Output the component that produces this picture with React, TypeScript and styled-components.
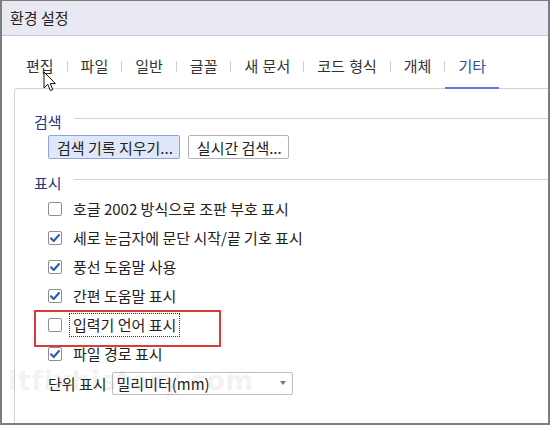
import React from "react";
import styled, { createGlobalStyle } from "styled-components";

const GlobalStyle = createGlobalStyle`
  html, body {
    margin: 0;
    padding: 0;
    background: #ffffff;
  }
  * {
    box-sizing: border-box;
  }
  body {
    font-family: "Noto Sans CJK KR", "Noto Sans", sans-serif;
  }
`;

const tabs = ["편집", "파일", "일반", "글꼴", "새 문서", "코드 형식", "개체", "기타"];

const options = [
  { label: "호글 2002 방식으로 조판 부호 표시", checked: false },
  { label: "세로 눈금자에 문단 시작/끝 기호 표시", checked: true },
  { label: "풍선 도움말 사용", checked: true },
  { label: "간편 도움말 표시", checked: true },
  { label: "입력기 언어 표시", checked: false, focused: true },
  { label: "파일 경로 표시", checked: true },
];

const App: React.FC = () => {
  return (
    <>
      <GlobalStyle />
      <Window>
        <TitleBar>환경 설정</TitleBar>
        <Body>
          <TabBar>
            {tabs.map((t, i) => (
              <React.Fragment key={t}>
                {i > 0 && <Sep />}
                <Tab $active={t === "기타"}>{t}</Tab>
              </React.Fragment>
            ))}
          </TabBar>

          <Panel>
            <GroupHead>
              <span>검색</span>
              <Rule />
            </GroupHead>
            <ButtonRow>
              <Button $selected>검색 기록 지우기...</Button>
              <Button>실시간 검색...</Button>
            </ButtonRow>

            <GroupHead $spaced>
              <span>표시</span>
              <Rule />
            </GroupHead>

            <List>
              {options.map((o) => (
                <Row key={o.label} $marked={o.focused}>
                  <Box>
                    {o.checked && (
                      <svg width="12" height="12" viewBox="0 0 12 12">
                        <path
                          d="M2 6.3 L4.7 9 L10 3"
                          fill="none"
                          stroke="#2557bd"
                          strokeWidth="2"
                          strokeLinecap="round"
                          strokeLinejoin="round"
                        />
                      </svg>
                    )}
                  </Box>
                  <Label $focused={o.focused}>{o.label}</Label>
                </Row>
              ))}
            </List>

            <UnitRow>
              <span>단위 표시</span>
              <Select>
                <span>밀리미터(mm)</span>
                <Caret />
              </Select>
              <Watermark>itfixhistory.com</Watermark>
            </UnitRow>
          </Panel>

          <Cursor width="14" height="22" viewBox="0 0 14 22">
            <path
              d="M1 1 L1 17 L4.8 13.4 L7.4 19.6 L9.8 18.6 L7.3 12.6 L12.4 12.6 Z"
              fill="#ffffff"
              stroke="#111111"
              strokeWidth="1"
              strokeLinejoin="round"
            />
          </Cursor>
        </Body>
      </Window>
    </>
  );
};

const Window = styled.div`
  width: 550px;
  height: 425px;
  display: flex;
  flex-direction: column;
  border: 2px solid #7d7d7d;
  border-top-width: 1px;
  background: #ffffff;
  overflow: hidden;
`;

const TitleBar = styled.div`
  height: 35px;
  flex: none;
  display: flex;
  align-items: center;
  padding: 0 0 1px 8px;
  background: #e9e9f4;
  border-bottom: 1px solid #c7c7da;
  font-size: 15px;
  color: #222;
`;

const Body = styled.div`
  flex: 1;
  display: flex;
  flex-direction: column;
  position: relative;
  min-height: 0;
`;

const TabBar = styled.div`
  height: 53px;
  flex: none;
  display: flex;
  align-items: flex-end;
  padding-left: 11px;
  margin-bottom: -1px;
  position: relative;
  z-index: 1;
`;

const Tab = styled.div<{ $active?: boolean }>`
  height: 35px;
  padding: 2px 13px 0 13px;
  display: flex;
  align-items: flex-start;
  line-height: 20px;
  font-size: 15px;
  word-spacing: 1px;
  white-space: nowrap;
  color: ${(p) => (p.$active ? "#2e4a9e" : "#333")};
  border-bottom: 2px solid ${(p) => (p.$active ? "#5a7ed8" : "transparent")};
`;

const Sep = styled.div`
  width: 1px;
  height: 11px;
  align-self: flex-end;
  margin-bottom: 17px;
  background: #cfcfcf;
`;

const Panel = styled.div`
  flex: 1;
  margin-left: 12px;
  border-left: 1px solid #d2d2d2;
  border-top: 1px solid #d2d2d2;
  border-top-left-radius: 4px;
  padding: 22px 0 0 19px;
  font-size: 15px;
  color: #222;
`;

const GroupHead = styled.div<{ $spaced?: boolean }>`
  display: flex;
  align-items: center;
  height: 20px;
  line-height: 20px;
  margin-top: ${(p) => (p.$spaced ? "13px" : "0")};
  color: #263782;
  font-size: 15px;

  & > span {
    margin-top: 1px;
  }
`;

const Rule = styled.div`
  flex: 1;
  height: 1px;
  margin: -5px 0 0 12px;
  background: #d3d3d3;
`;

const ButtonRow = styled.div`
  display: flex;
  gap: 8px;
  margin: 4px 0 0 14px;
`;

const Button = styled.div<{ $selected?: boolean }>`
  height: 24px;
  padding: 0 6px 0 8px;
  display: flex;
  align-items: center;
  font-size: 15px;
  color: #222;
  border: 1px solid ${(p) => (p.$selected ? "#8ea6dc" : "#b4b4b4")};
  background: ${(p) => (p.$selected ? "#dfe7f8" : "#ffffff")};
  border-radius: 2px;
  white-space: nowrap;
`;

const List = styled.div`
  display: flex;
  flex-direction: column;
  margin-top: 2px;
  padding-left: 14px;
`;

const Row = styled.div<{ $marked?: boolean }>`
  height: 29px;
  display: flex;
  align-items: center;
  position: relative;

  &::after {
    content: "";
    display: ${(p) => (p.$marked ? "block" : "none")};
    position: absolute;
    left: -14px;
    top: 0;
    width: 183px;
    height: 33px;
    border: 2px solid #dc3b37;
  }
`;

const Box = styled.div`
  width: 14px;
  height: 14px;
  flex: none;
  border: 1px solid #8e8e8e;
  border-radius: 2px;
  background: #fff;
  display: flex;
  align-items: center;
  justify-content: center;
`;

const Label = styled.span<{ $focused?: boolean }>`
  margin-left: 7px;
  padding: 1px 3px;
  line-height: 20px;
  border: 1px dotted ${(p) => (p.$focused ? "#333" : "transparent")};
  white-space: nowrap;
`;

const UnitRow = styled.div`
  display: flex;
  align-items: center;
  gap: 5px;
  margin: 3px 0 0 14px;
  height: 24px;
  position: relative;
`;

const Select = styled.div`
  width: 181px;
  height: 23px;
  display: flex;
  align-items: center;
  justify-content: space-between;
  padding: 0 6px 0 4px;
  border: 1px solid #bdbdbd;
  border-radius: 2px;
  background: #fff;
`;

const Caret = styled.span`
  width: 0;
  height: 0;
  border-left: 3px solid transparent;
  border-right: 3px solid transparent;
  border-top: 4px solid #777;
`;

const Watermark = styled.div`
  position: absolute;
  left: -40px;
  top: -6px;
  font-family: "DejaVu Sans", sans-serif;
  font-weight: bold;
  font-size: 27px;
  letter-spacing: 0.5px;
  color: rgba(120, 120, 120, 0.1);
  pointer-events: none;
  white-space: nowrap;
`;

const Cursor = styled.svg`
  position: absolute;
  left: 41px;
  top: 35px;
  z-index: 2;
`;

export default App;
